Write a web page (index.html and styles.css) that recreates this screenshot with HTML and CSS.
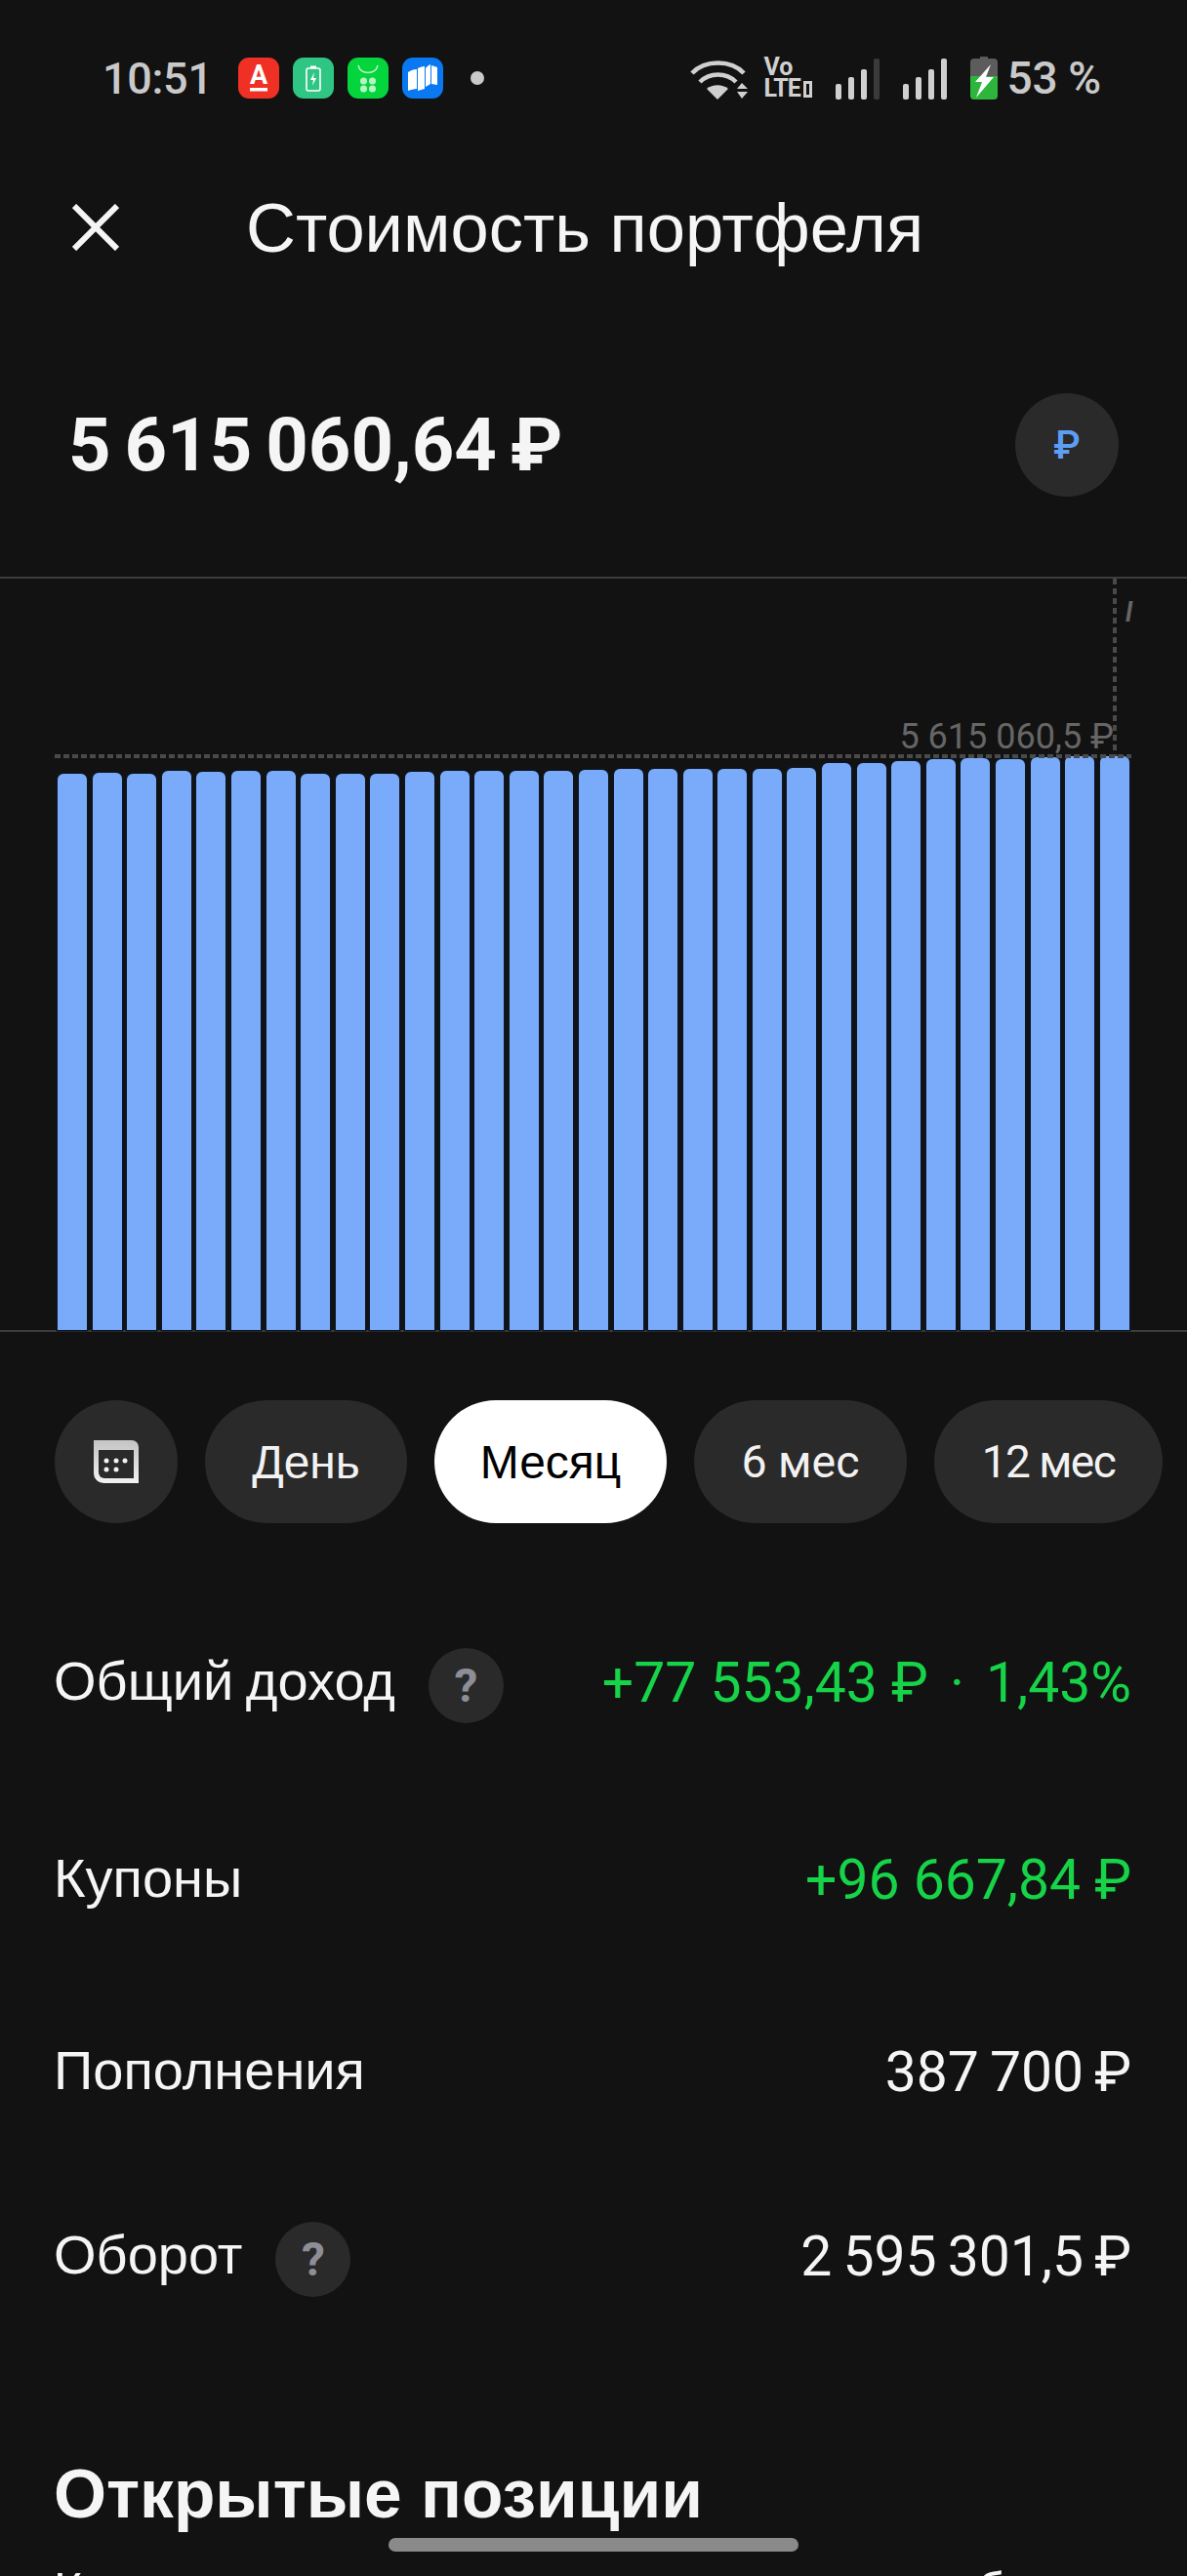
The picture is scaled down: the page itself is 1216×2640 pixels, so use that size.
FILE: index.html
```html
<!DOCTYPE html>
<html lang="ru">
<head>
    <meta charset="UTF-8">
    <meta name="viewport" content="width=device-width, initial-scale=1.0">
    <title>Стоимость портфеля</title>
    <link rel="stylesheet" href="styles.css">
</head>
<body>
<div class="page">

    <!-- Status bar -->
    <div class="statusbar">
        <span class="time">10:51</span>
        <div class="notif-icons">
            <svg class="app-icon" viewBox="0 0 42 42"><rect width="42" height="42" rx="11" fill="#ee3124"/><text x="21" y="27" text-anchor="middle" class="logo-a">А</text><rect x="12" y="31" width="18" height="3.5" fill="#fff"/></svg>
            <svg class="app-icon" viewBox="0 0 42 42"><rect width="42" height="42" rx="11" fill="#2fc684"/><rect x="14" y="11" width="14" height="23" rx="2" fill="none" stroke="#fff" stroke-width="1.6"/><rect x="18" y="8.5" width="6" height="2.5" fill="#fff"/><path d="M22 15l-4 8h3l-1 6 4-8h-3z" fill="#fff"/></svg>
            <svg class="app-icon" viewBox="0 0 42 42"><rect width="42" height="42" rx="11" fill="#05d53d"/><path d="M11 8c2 10 18 10 20 0" fill="none" stroke="#c8f7d3" stroke-width="1.4"/><g fill="#b5f5c4"><circle cx="16.500" cy="24" r="3.500"/><circle cx="25.500" cy="24" r="3.500"/><circle cx="16.500" cy="32" r="3.500"/><circle cx="25.500" cy="32" r="3.500"/></g></svg>
            <svg class="app-icon" viewBox="0 0 42 42"><rect width="42" height="42" rx="11" fill="#0a78f0"/><path d="M6 15c3-2 6-3 9-3v20c-3 0-6 1-9 2zM16 11c2-1 4-2 7-2v23l-7 2zM24 11c1-2 3-3 5-4v20l-5 3zM30 8l6 2v18l-6-1z" fill="#fff"/></svg>
            <span class="notif-dot"></span>
        </div>
        <div class="sys-icons">
            <svg class="wifi" viewBox="0 0 59 42">
                <g fill="none" stroke="#d0d0d0" stroke-width="4.500">
                    <path d="M2 15C15 1 42 1 55 15"/>
                    <path d="M10 24C20 14 37 14 47 24"/>
                </g>
                <path d="M17 31C23 26 33 26 39 31L28 42z" fill="#d0d0d0"/>
                <path d="M48 31l5-6 6 6zM48 34l5 7 6-7z" fill="#d0d0d0"/>
            </svg>
            <div class="volte"><span>Vo</span><span class="lte">LTE<i></i></span></div>
            <div class="signal">
                <i class="b1"></i><i class="b2"></i><i class="b3"></i><i class="b4 off"></i>
            </div>
            <div class="signal">
                <i class="b1"></i><i class="b2"></i><i class="b3"></i><i class="b4"></i>
            </div>
            <svg class="battery" viewBox="0 0 28 44">
                <path d="M10 0h8v2h6a4 4 0 0 1 4 4v14H0V6a4 4 0 0 1 4-4h6z" fill="#5c5c5c"/>
                <path d="M0 20h28v20a4 4 0 0 1-4 4H4a4 4 0 0 1-4-4z" fill="#2db53c"/>
                <path d="M21 8L5 26h7L6 42l18-21h-8z" fill="#fff"/>
            </svg>
            <span class="battery-text">53 %</span>
        </div>
    </div>

    <!-- Title -->
    <div class="topbar">
        <svg class="close-icon" viewBox="0 0 48 48"><path d="M2 2L46 46M46 2L2 46" stroke="#f5f5f5" stroke-width="6" fill="none"/></svg>
        <h1>Стоимость портфеля</h1>
    </div>

    <div class="balance">
        <span class="amount">5 615 060,64 ₽</span>
        <span class="currency-btn">₽</span>
    </div>

    <!-- Chart -->
    <div class="chart">
        <div class="guide-v"></div>
        <span class="guide-mark">l</span>
        <span class="guide-label">5 615 060,5 ₽</span>
        <div class="guide-h"></div>
        <div class="bars" id="bars"></div>
    </div>

    <!-- Period buttons -->
    <div class="periods">
        <button class="chip chip-icon">
            <svg viewBox="0 0 46 44" width="46" height="44">
                <defs><linearGradient id="calTop" x1="0" y1="0" x2="0" y2="1"><stop offset="0" stop-color="#c4c4c4"/><stop offset="1" stop-color="#f2f2f2"/></linearGradient></defs>
                <path d="M0 0H39a7 7 0 0 1 7 7V44H10A10 10 0 0 1 0 34z" fill="url(#calTop)"/>
                <path d="M5 10H41V39H11a6 6 0 0 1-6-6z" fill="#2a2a2a"/>
                <g fill="#f2f2f2"><circle cx="13" cy="21" r="2.500"/><circle cx="23" cy="21" r="2.500"/><circle cx="32" cy="21" r="2.500"/><circle cx="13" cy="30" r="2.500"/><circle cx="23" cy="30" r="2.500"/></g>
            </svg>
        </button>
        <button class="chip chip-day">День</button>
        <button class="chip chip-month active">Месяц</button>
        <button class="chip chip-six">6 мес</button>
        <button class="chip chip-year">12 мес</button>
    </div>

    <!-- Totals -->
    <div class="row row-income">
        <div class="row-label">Общий доход <span class="help">?</span></div>
        <div class="row-value green">+77 553,43 ₽ <span class="sep">·</span> 1,43%</div>
    </div>
    <div class="row row-coupons">
        <div class="row-label">Купоны</div>
        <div class="row-value green">+96 667,84 ₽</div>
    </div>
    <div class="row row-deposits">
        <div class="row-label">Пополнения</div>
        <div class="row-value">387 700 ₽</div>
    </div>
    <div class="row row-turnover">
        <div class="row-label">Оборот <span class="help">?</span></div>
        <div class="row-value">2 595 301,5 ₽</div>
    </div>

    <h2>Открытые позиции</h2>
    <p class="positions-note">Количество и текущая стоимость ваших бумаг</p>

    <div class="home-bar"></div>
</div>

<script>
    // tops of the bars, px from the top edge of the page
    const barTops = [793, 792, 793, 790, 791, 790, 790, 793, 793, 793, 791, 790, 790, 790, 790, 789, 788, 788, 788, 788, 788, 787, 782, 782, 780, 778, 777, 778, 776, 775, 775];
    const chartBottom = 1363;
    const bars = document.getElementById('bars');
    barTops.forEach(top => {
        const bar = document.createElement('div');
        bar.className = 'bar';
        bar.style.height = (chartBottom - top) + 'px';
        bars.appendChild(bar);
    });
</script>
</body>
</html>
```

FILE: styles.css
```css
* {
    box-sizing: border-box;
}

html, body {
    margin: 0;
    padding: 0;
    background-color: #121212;
}

.page {
    position: relative;
    width: 1216px;
    height: 2640px;
    overflow: hidden;
    font-family: 'Liberation Sans', Arial, sans-serif;
    color: #f5f5f5;
    background-color: #121212;
}

/* status bar */
.statusbar {
    display: flex;
    align-items: center;
    height: 158px;
    padding: 2px 88px 0 105px;
    font-family: 'Roboto', sans-serif;
    color: #c9c9c9;
}

.time {
    width: 139px;
    font-size: 45px;
    font-weight: 500;
    letter-spacing: -0.3px;
}

.notif-icons {
    display: flex;
    align-items: center;
    gap: 14px;
}

.app-icon {
    width: 42px;
    height: 42px;
}

.logo-a {
    font-family: 'Roboto', sans-serif;
    font-size: 27px;
    font-weight: 700;
    fill: #fff;
}

.notif-dot {
    width: 14px;
    height: 14px;
    margin-left: 14px;
    border-radius: 50%;
    background-color: #c9c9c9;
}

.sys-icons {
    display: flex;
    align-items: flex-end;
    margin-left: auto;
    height: 44px;
}

.wifi {
    width: 59px;
    height: 42px;
    margin-right: 16px;
}

.volte {
    display: flex;
    flex-direction: column;
    width: 54px;
    margin-right: 20px;
    font-size: 25px;
    line-height: 22px;
    font-weight: 700;
    color: #d0d0d0;
}

.lte {
    display: flex;
    align-items: center;
    letter-spacing: -1px;
}

.lte i {
    width: 9px;
    height: 17px;
    margin-left: 3px;
    border: 3px solid #d0d0d0;
}

.signal {
    display: flex;
    align-items: flex-end;
    gap: 7px;
    height: 42px;
    margin-right: 24px;
}

.signal i {
    width: 6px;
    border-radius: 2px;
    background-color: #d0d0d0;
}

.signal .b1 { height: 16px; }
.signal .b2 { height: 23px; }
.signal .b3 { height: 31px; }
.signal .b4 { height: 42px; }
.signal .off { background-color: #3a3a3a; }

.battery {
    width: 28px;
    height: 44px;
}

.battery-text {
    margin-left: 9px;
    font-size: 46px;
    line-height: 44px;
    font-weight: 500;
    word-spacing: -1px;
}

/* title */
.topbar {
    display: flex;
    align-items: center;
    height: 150px;
    padding-left: 74px;
}

.close-icon {
    width: 48px;
    height: 48px;
    flex: none;
}

h1 {
    margin: 0 0 0 130px;
    font-size: 70.5px;
    font-weight: 400;
}

.balance {
    display: flex;
    align-items: center;
    justify-content: space-between;
    height: 283px;
    padding: 95px 70px 82px 70px;
}

.amount {
    font-family: 'Roboto', sans-serif;
    font-size: 76px;
    font-weight: 700;
    word-spacing: -5px;
}

.currency-btn {
    display: flex;
    align-items: center;
    justify-content: center;
    width: 106px;
    height: 106px;
    border-radius: 50%;
    background-color: #2a2a2a;
    color: #5c9df5;
    font-family: 'Roboto', 'DejaVu Sans', sans-serif;
    font-size: 40px;
    font-weight: 500;
}

/* chart */
.chart {
    position: relative;
    height: 774px;
    border-top: 2px solid #3d3d3d;
    border-bottom: 2px solid #3d3d3d;
}

.bars {
    display: flex;
    align-items: flex-end;
    gap: 5.6px;
    height: 770px;
    padding-left: 59px;
}

.bar {
    width: 30px;
    border-radius: 6px 6px 0 0;
    background-color: #7aabfa;
    box-shadow: 0 0 0 1.5px #0d1622;
}

.guide-v {
    position: absolute;
    top: 0;
    left: 1140px;
    width: 4px;
    height: 182px;
    background: repeating-linear-gradient(to bottom, #4a4a4a 0 6px, transparent 6px 10px);
}

.guide-h {
    position: absolute;
    top: 180px;
    left: 56px;
    width: 1103px;
    height: 4px;
    background: repeating-linear-gradient(to right, #4a4a4a 0 6px, transparent 6px 9px);
}

.guide-label {
    position: absolute;
    top: 142px;
    right: 75px;
    font-family: 'Roboto', sans-serif;
    font-size: 36px;
    line-height: 41px;
    color: #666;
}

.guide-mark {
    position: absolute;
    top: 19px;
    left: 1153px;
    font-family: 'Roboto', sans-serif;
    font-size: 27px;
    font-style: italic;
    font-weight: 700;
    color: #666;
}

/* period buttons */
.periods {
    display: flex;
    gap: 28px;
    margin-top: 70px;
    padding-left: 56px;
}

.chip {
    display: flex;
    align-items: center;
    justify-content: center;
    height: 126px;
    padding: 0;
    border: none;
    border-radius: 63px;
    background-color: #2a2a2a;
    color: #f2f2f2;
    font-family: 'Liberation Sans', Arial, sans-serif;
    font-size: 48px;
}

.chip-icon { width: 126px; }
.chip-day { width: 207px; }
.chip-month { width: 238px; }
.chip-six { width: 218px; font-family: 'Roboto', sans-serif; font-size: 46.5px; }
.chip-year { width: 234px; font-family: 'Roboto', sans-serif; font-size: 46px; letter-spacing: -1.5px; }

.chip.active {
    background-color: #fff;
    color: #000;
}

/* totals */
.row {
    display: flex;
    align-items: center;
    justify-content: space-between;
    height: 77px;
    padding: 0 57px 0 55px;
    font-size: 56px;
    word-spacing: -3px;
}

.row-income { margin-top: 123px; }
.row-coupons { margin-top: 125px; }
.row-deposits { margin-top: 120px; }
.row-turnover { margin-top: 112px; }

.row-label {
    display: flex;
    align-items: center;
}

.row-value {
    margin-top: 4px;
    font-family: 'Roboto', sans-serif;
    font-size: 57px;
    font-weight: 400;
    word-spacing: -3px;
}

.row-value.green {
    color: #16d348;
    word-spacing: 0;
}

.sep {
    margin: 0 8px;
}

.help {
    display: flex;
    align-items: center;
    justify-content: center;
    width: 77px;
    height: 77px;
    margin: 10px 0 0 34px;
    border-radius: 50%;
    background-color: #2a2a2a;
    color: #8e8e96;
    font-family: 'Roboto', sans-serif;
    font-size: 48px;
    font-weight: 700;
}

h2 {
    margin: 167px 0 0 55px;
    font-size: 69.5px;
    line-height: 80px;
    font-weight: 700;
}

.positions-note {
    margin: 29px 0 0 55px;
    font-size: 50px;
    line-height: 60px;
    white-space: nowrap;
}

.home-bar {
    position: absolute;
    left: 398px;
    top: 2601px;
    width: 420px;
    height: 14px;
    border-radius: 7px;
    background-color: #8a8a8a;
}
```
